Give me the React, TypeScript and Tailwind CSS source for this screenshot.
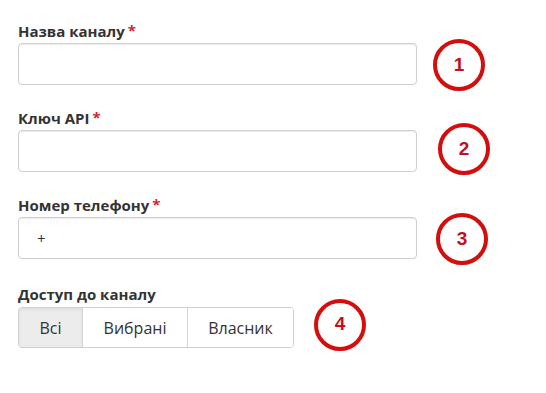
import React from "react";

const fields = [
  { label: "Назва каналу", value: "", mark: "1", markClass: "ml-[16px] mt-[2px]" },
  { label: "Ключ API", value: "", mark: "2", markClass: "ml-[21px] -mt-[4px]" },
  { label: "Номер телефону", value: "+", mark: "3", markClass: "ml-[19px] mt-[2px]" },
];

const Mark = ({ n, className }: { n: string; className?: string }) => (
  <div
    className={`flex h-[52px] w-[52px] shrink-0 items-center justify-center rounded-full border-[4px] border-[#d40d0d] text-[19px] font-bold text-[#c1121c] ${className ?? ""}`}
    style={{ fontFamily: '"Liberation Sans", Arial, sans-serif' }}
  >
    {n}
  </div>
);

const Label = ({ text, required }: { text: string; required?: boolean }) => (
  <div className="flex h-[20px] items-start text-[15px] font-bold leading-[20px] text-[#333]">
    <span>{text}</span>
    {required && <span className="ml-[3px] -mt-[1px] text-[#d9232d]">*</span>}
  </div>
);

export default function App() {
  return (
    <div
      className="min-h-[393px] w-[546px] bg-white pl-[18px] pt-[21px]"
      style={{ fontFamily: '"Open Sans", "Noto Sans", sans-serif' }}
    >
      {fields.map((f) => (
        <div key={f.mark} className="mb-[23px]">
          <Label text={f.label} required />
          <div className="mt-[2px] flex h-[42px] items-center">
            <div className="flex h-[42px] w-[399px] items-center rounded-[4px] border border-[#cfcfcf] bg-white pl-[18px] text-[15px] text-[#333] shadow-[inset_0_1px_1px_rgba(0,0,0,0.08)]">
              {f.value}
            </div>
            <Mark n={f.mark} className={f.markClass} />
          </div>
        </div>
      ))}

      <div className="pt-[2px]">
        <Label text="Доступ до каналу" />
        <div className="mt-[3px] flex h-[41px] items-center">
          <div className="flex h-[41px] overflow-hidden rounded-[4px] border border-[#cfcfcf] text-[16px] text-[#333]">
            <div className="flex w-[63px] items-center justify-center bg-[#ececec] shadow-[inset_0_2px_3px_rgba(0,0,0,0.06)]">Всі</div>
            <div className="flex w-[105px] items-center justify-center border-l border-[#d6d6d6] bg-white">Вибрані</div>
            <div className="flex w-[106px] items-center justify-center border-l border-[#d6d6d6] bg-white">Власник</div>
          </div>
          <Mark n="4" className="ml-[20px] -mt-[6px]" />
        </div>
      </div>
    </div>
  );
}
